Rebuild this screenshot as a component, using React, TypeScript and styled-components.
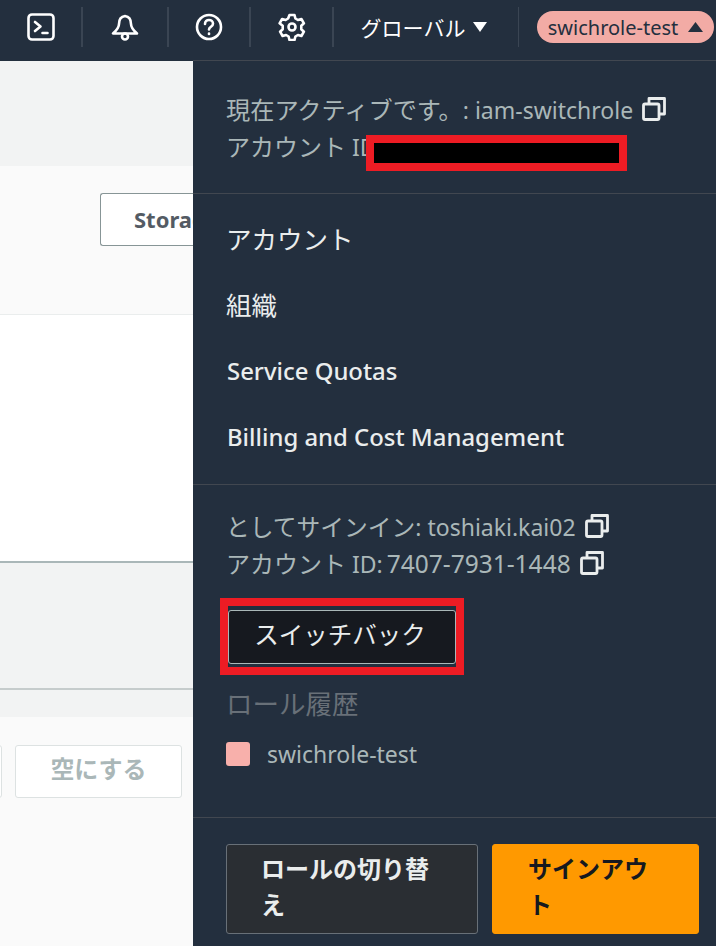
import React from 'react'
import styled, { createGlobalStyle } from 'styled-components'

const GlobalStyle = createGlobalStyle`
  html, body {
    margin: 0;
    padding: 0;
    background: #f2f3f3;
  }
  * {
    box-sizing: border-box;
  }
  body {
    font-family: "Noto Sans", "Noto Sans CJK JP", sans-serif;
  }
`

const Page = styled.div`
  width: 716px;
  height: 946px;
  display: flex;
  flex-direction: column;
  overflow: hidden;
`

const TopBar = styled.div`
  height: 60px;
  flex: none;
  background: #232f3e;
  display: flex;
  align-items: flex-start;
  padding-top: 7px;
`

const IconCell = styled.div<{ $width: number }>`
  width: ${p => p.$width}px;
  height: 40px;
  flex: none;
  display: flex;
  align-items: center;
  justify-content: center;
  border-right: 2px solid #3a4553;
  color: #fff;
`

const RegionCell = styled.div`
  width: 185px;
  height: 40px;
  flex: none;
  display: flex;
  align-items: center;
  justify-content: center;
  gap: 8px;
  padding-right: 4px;
  border-right: 1px solid #3a4553;
  color: #fff;
  font-size: 21px;
`

const Caret = styled.svg`
  display: block;
  flex: none;
`

const RolePill = styled.div`
  margin: 4px 0 0 18px;
  width: 177px;
  height: 32px;
  flex: none;
  border-radius: 16px;
  background: #f2aba5;
  color: #232f3e;
  font-size: 20px;
  display: flex;
  align-items: center;
  justify-content: center;
  gap: 10px;
`

const Body = styled.div`
  flex: 1;
  min-height: 0;
  display: flex;
`

const Console = styled.div`
  width: 193px;
  flex: none;
  display: flex;
  flex-direction: column;
  border-top: 1px solid #232f3e;
`

const GreyBand = styled.div`
  height: 105px;
  flex: none;
  background: #f2f3f3;
`

const ActionBand = styled.div`
  height: 149px;
  flex: none;
  background: #fafafa;
  border-bottom: 1px solid #eaeded;
  padding: 27px 0 0 100px;
`

const StorageButton = styled.div`
  width: 93px;
  height: 53px;
  background: #fff;
  border: 1px solid #879596;
  border-right: none;
  border-radius: 3px 0 0 3px;
  color: #545b64;
  font-size: 22px;
  font-weight: 700;
  line-height: 50px;
  padding-left: 33px;
  white-space: nowrap;
  overflow: hidden;
`

const WhiteBand = styled.div`
  height: 248px;
  flex: none;
  background: #fff;
  border-bottom: 2px solid #aab7b8;
`

const EmptyBand = styled.div`
  height: 127px;
  flex: none;
  background: #f2f3f3;
  border-bottom: 2px solid #c6cccc;
`

const ThinBand = styled.div`
  height: 27px;
  flex: none;
  background: #f2f3f3;
`

const FooterBand = styled.div`
  flex: 1;
  background: #fafafa;
  padding: 28px 0 0 15px;
  position: relative;
`

const ClippedButton = styled.div`
  position: absolute;
  left: -8px;
  top: 28px;
  width: 10px;
  height: 53px;
  background: #fff;
  border: 1px solid #dde2e2;
  border-radius: 3px;
`

const DisabledButton = styled.div`
  width: 167px;
  height: 53px;
  background: #fff;
  border: 1px solid #dde2e2;
  border-radius: 3px;
  color: #aab7b8;
  font-size: 24px;
  font-weight: 700;
  line-height: 45px;
  text-align: center;
`

const Menu = styled.div`
  width: 523px;
  flex: none;
  background: #232f3e;
  border-top: 1px solid #414750;
  display: flex;
  flex-direction: column;
`

const Section = styled.div<{ $height: number; $top: number }>`
  height: ${p => p.$height}px;
  flex: none;
  padding: ${p => p.$top}px 17px 0 33px;
  border-bottom: 1px solid #414750;
  display: flex;
  flex-direction: column;
`

const InfoLine = styled.div`
  height: 37px;
  flex: none;
  display: flex;
  align-items: center;
  gap: 9px;
  color: #aab7b8;
  font-size: 23px;
  white-space: nowrap;
`

const Ja = styled.span<{ $size: number }>`
  font-size: ${p => p.$size}px;
`

const AccountNumber = styled.span`
  font-size: 24.5px;
  margin-left: -2px;
`

const RedactFrame = styled.div`
  position: absolute;
  left: 366px;
  top: 135px;
  width: 261px;
  height: 36px;
  background: #000;
  border: 8px solid #ed1c24;
`

const MenuLink = styled.div`
  height: 66.5px;
  flex: none;
  display: flex;
  align-items: center;
  padding-left: 1px;
  color: #eaeded;
  font-size: 23.9px;
  font-weight: 500;
  white-space: nowrap;
`

const JaLink = styled(MenuLink)`
  padding-left: 0;
  font-size: 25.5px;
  font-weight: 400;
`

const SwitchFrame = styled.div`
  width: 244px;
  height: 77px;
  margin: 17px 0 0 -6px;
  flex: none;
  border: 8px solid #ed1c24;
`

const SwitchButton = styled.div`
  height: 54px;
  margin-top: 4px;
  padding-right: 4px;
  background: #16191f;
  border: 1px solid #aab7b8;
  border-radius: 3px;
  color: #eaeded;
  font-size: 24.5px;
  line-height: 48px;
  text-align: center;
`

const HistoryTitle = styled.div`
  margin-top: 9px;
  height: 36px;
  display: flex;
  align-items: center;
  color: #687078;
  font-size: 26.5px;
`

const HistoryRow = styled.div`
  margin-top: 18px;
  display: flex;
  align-items: center;
  gap: 17px;
  color: #aab7b8;
  font-size: 23px;
`

const Swatch = styled.div`
  width: 24px;
  height: 24px;
  border-radius: 3px;
  background: #f8b0ab;
`

const ActionRow = styled.div`
  padding: 26px 17px 0 33px;
  display: flex;
  gap: 14px;
`

const MenuButton = styled.div<{ $primary?: boolean; $width: number; $pad: number }>`
  width: ${p => p.$width}px;
  height: 90px;
  flex: none;
  border-radius: 3px;
  border: 1px solid ${p => (p.$primary ? '#ff9900' : '#687078')};
  background: ${p => (p.$primary ? '#ff9900' : '#2a2e33')};
  color: ${p => (p.$primary ? '#16191f' : '#eaeded')};
  font-size: 24px;
  font-weight: 700;
  line-height: 36px;
  padding: 6px ${p => p.$pad}px 0;
`

const strokeIcon = { fill: 'none', stroke: 'currentColor', strokeWidth: 2.6, strokeLinecap: 'round', strokeLinejoin: 'round' } as const

const TerminalIcon = () => (
  <svg width="28" height="28" viewBox="0 0 28 28" {...strokeIcon}>
    <rect x="1.500" y="1.500" width="25" height="25" rx="3.500" />
    <path d="M8 9l5.500 4.500L8 18M15.500 20h5" />
  </svg>
)

const BellIcon = () => (
  <svg width="28" height="28" viewBox="0 0 28 28" {...strokeIcon}>
    <path d="M14 3c-4 .5-6 3.500-6 8 0 3.500-2 6-6 9.500h24c-4-3.500-6-6-6-9.500 0-4.500-2-7.500-6-8z" />
    <circle cx="14" cy="23.500" r="3" />
  </svg>
)

const HelpIcon = () => (
  <svg width="28" height="28" viewBox="0 0 28 28" {...strokeIcon}>
    <circle cx="14" cy="14" r="12" />
    <path d="M10 11c0-2.500 1.800-4 4-4s4 1.500 4 3.700c0 3-4 3-4 5.800" />
    <path d="M14 20.500v.5" />
  </svg>
)

const GearIcon = () => (
  <svg width="28" height="28" viewBox="0 0 28 28" {...strokeIcon}>
    <path d="M11.500 2h5l.9 3.500 2.500 1.500 3.500-1 2.500 4.300-2.600 2.500v3.400l2.600 2.500-2.500 4.300-3.500-1-2.500 1.500-.9 3.500h-5l-.9-3.500-2.500-1.500-3.500 1-2.500-4.300 2.600-2.500v-3.400L1.600 10.300l2.500-4.300 3.500 1 2.500-1.500z" />
    <circle cx="14" cy="14" r="3.500" />
  </svg>
)

const CopyIcon = () => (
  <svg width="24" height="24" viewBox="0 0 24 24" fill="none" stroke="#eaeded" strokeWidth="2.800" strokeLinejoin="round">
    <rect x="1.500" y="7" width="15.500" height="15.500" rx="1.500" />
    <path d="M7 7V1.500h15.500V17H17" />
  </svg>
)

const App: React.FC = () => (
  <Page>
    <GlobalStyle />
    <TopBar>
      <IconCell $width={83}><TerminalIcon /></IconCell>
      <IconCell $width={86}><BellIcon /></IconCell>
      <IconCell $width={82}><HelpIcon /></IconCell>
      <IconCell $width={83}><GearIcon /></IconCell>
      <RegionCell>
        グローバル
        <Caret width="14" height="12" viewBox="0 0 14 12"><path d="M0 1h14L7 11z" fill="#fff" /></Caret>
      </RegionCell>
      <RolePill>
        swichrole-test
        <Caret width="15" height="12" viewBox="0 0 15 12"><path d="M0 11h15L7.500 1z" fill="#232f3e" /></Caret>
      </RolePill>
    </TopBar>
    <Body>
      <Console>
        <GreyBand />
        <ActionBand>
          <StorageButton>Storage</StorageButton>
        </ActionBand>
        <WhiteBand />
        <EmptyBand />
        <ThinBand />
        <FooterBand>
          <ClippedButton />
          <DisabledButton>空にする</DisabledButton>
        </FooterBand>
      </Console>
      <Menu>
        <Section $height={133} $top={29}>
          <InfoLine><span><Ja $size={24.2}>現在アクティブです。</Ja>: iam-switchrole</span><CopyIcon /></InfoLine>
          <InfoLine><span><Ja $size={24}>アカウント</Ja> ID</span></InfoLine>
        </Section>
        <Section $height={291} $top={10}>
          <JaLink>アカウント</JaLink>
          <JaLink>組織</JaLink>
          <MenuLink>Service Quotas</MenuLink>
          <MenuLink>Billing and Cost Management</MenuLink>
        </Section>
        <Section $height={333} $top={22}>
          <InfoLine><span><Ja $size={23.75}>としてサインイン</Ja>: toshiaki.kai02</span><CopyIcon /></InfoLine>
          <InfoLine><span><Ja $size={24}>アカウント</Ja> ID: <AccountNumber>7407-7931-1448</AccountNumber></span><CopyIcon /></InfoLine>
          <SwitchFrame>
            <SwitchButton>スイッチバック</SwitchButton>
          </SwitchFrame>
          <HistoryTitle>ロール履歴</HistoryTitle>
          <HistoryRow><Swatch />swichrole-test</HistoryRow>
        </Section>
        <ActionRow>
          <MenuButton $width={252} $pad={34}>ロールの切り替え</MenuButton>
          <MenuButton $primary $width={207} $pad={35}>サインアウト</MenuButton>
        </ActionRow>
      </Menu>
    </Body>
    <RedactFrame />
  </Page>
)

export default App
